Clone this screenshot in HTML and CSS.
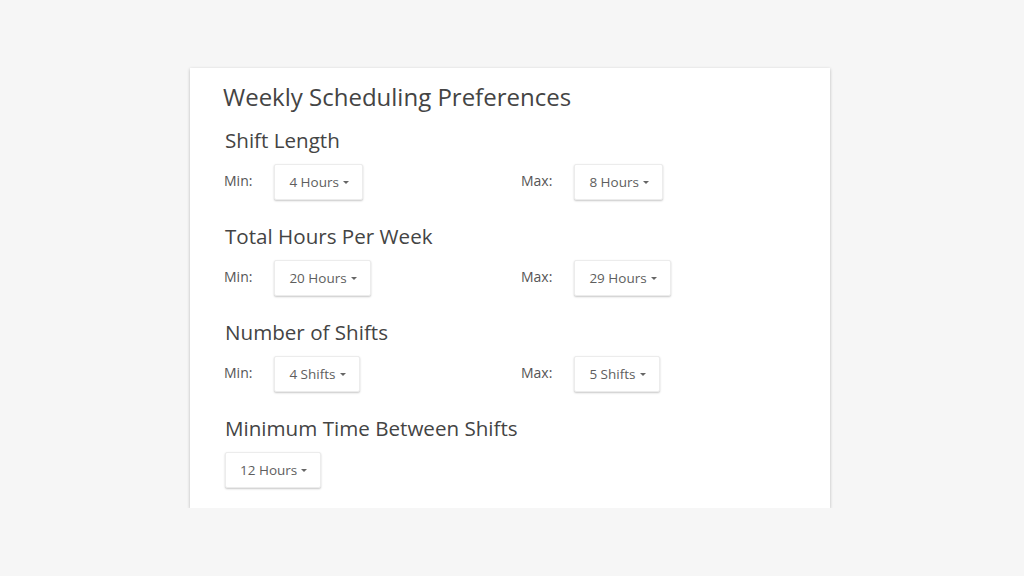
FILE: index.html
```html
<!DOCTYPE html>
<html lang="en">
<head>
  <meta charset="UTF-8">
  <title>Weekly Scheduling Preferences</title>
  <link rel="stylesheet" href="styles.css">
</head>
<body>
  <div class="card">
    <h1>Weekly Scheduling Preferences</h1>

    <div class="section">
      <h2>Shift Length</h2>
      <div class="row">
        <div class="field">
          <span class="label">Min:</span>
          <button class="dropdown">4 Hours <span class="caret"></span></button>
        </div>
        <div class="field">
          <span class="label">Max:</span>
          <button class="dropdown">8 Hours <span class="caret"></span></button>
        </div>
      </div>
    </div>

    <div class="section">
      <h2>Total Hours Per Week</h2>
      <div class="row">
        <div class="field">
          <span class="label">Min:</span>
          <button class="dropdown">20 Hours <span class="caret"></span></button>
        </div>
        <div class="field">
          <span class="label">Max:</span>
          <button class="dropdown">29 Hours <span class="caret"></span></button>
        </div>
      </div>
    </div>

    <div class="section">
      <h2>Number of Shifts</h2>
      <div class="row">
        <div class="field">
          <span class="label">Min:</span>
          <button class="dropdown">4 Shifts <span class="caret"></span></button>
        </div>
        <div class="field">
          <span class="label">Max:</span>
          <button class="dropdown">5 Shifts <span class="caret"></span></button>
        </div>
      </div>
    </div>

    <div class="section">
      <h2>Minimum Time Between Shifts</h2>
      <div class="row">
        <button class="dropdown">12 Hours <span class="caret"></span></button>
      </div>
    </div>
  </div>
</body>
</html>
```

FILE: styles.css
```css
body {
  margin: 0;
  background: #f6f6f6;
  font-family: "Open Sans", "Liberation Sans", sans-serif;
  color: #444;
}
.card {
  width: 607px;
  margin: 68px 0 0 190px;
  padding: 13px 0 20px 33px;
  background: #fff;
  box-shadow: 0 1px 3px rgba(0, 0, 0, 0.25);
}
h1 {
  margin: 0;
  font-size: 24px;
  line-height: 32px;
  font-weight: 400;
  color: #444;
}
.section {
  margin-top: 22px;
  padding-left: 2px;
}
.section:first-of-type {
  margin-top: 13px;
}
h2 {
  margin: 0;
  font-size: 20.6px;
  line-height: 28px;
  font-weight: 400;
  color: #444;
}
.row {
  display: grid;
  grid-template-columns: 297px 297px;
  margin-top: 10px;
}
.field {
  display: flex;
  align-items: center;
  margin-left: -1px;
}
.label {
  margin-right: 22px;
  font-size: 14px;
  color: #555;
  margin-top: -3px;
}
.dropdown {
  height: 36px;
  padding: 0 13px 0 14px;
  justify-self: start;
  background: #fff;
  border: 1px solid #ececec;
  border-radius: 2px;
  box-shadow: 0 1px 2px rgba(0, 0, 0, 0.22);
  font-family: inherit;
  font-size: 13.5px;
  color: #5e5e5e;
  display: inline-flex;
  align-items: center;
  gap: 4px;
}
.caret {
  width: 0;
  height: 0;
  border-left: 3.5px solid transparent;
  border-right: 3.5px solid transparent;
  border-top: 3.5px solid #666;
}
```
